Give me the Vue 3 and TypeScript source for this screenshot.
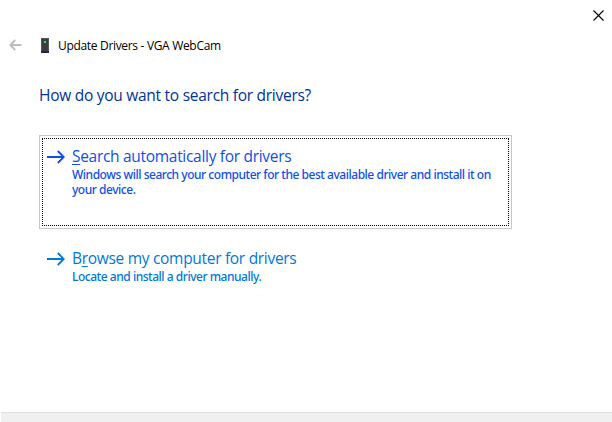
<script setup lang="ts">
interface Choice {
  id: string
  before: string
  key: string
  after: string
  lines: string[]
  focused: boolean
}

const choices: Choice[] = [
  {
    id: 'search',
    before: '',
    key: 'S',
    after: 'earch automatically for drivers',
    lines: ['Windows will search your computer for the best available driver and install it on', 'your device.'],
    focused: true,
  },
  {
    id: 'browse',
    before: 'B',
    key: 'r',
    after: 'owse my computer for drivers',
    lines: ['Locate and install a driver manually.'],
    focused: false,
  },
]
</script>

<template>
  <div class="wizard">
    <div class="caption">
      <button class="close" aria-label="Close">
        <svg width="11" height="11" viewBox="0 0 11 11"><path d="M.5.5l10 10M10.5.5l-10 10" stroke="#000" stroke-width="1.1" fill="none" /></svg>
      </button>
    </div>
    <header class="titlebar">
      <svg class="back" width="13" height="12" viewBox="0 0 13 12"><path d="M12.5 6H1.5M6.2 1L1.3 6l4.9 5" stroke="#bdbdbd" stroke-width="1.8" fill="none" /></svg>
      <svg class="device" width="8" height="15" viewBox="0 0 8 15" shape-rendering="crispEdges">
        <path d="M0 0h8v13H0z" fill="#55565c" />
        <path d="M1 1h6v12H1z" fill="#3c3d42" />
        <path d="M0 13h8v2H0z" fill="#292a35" />
        <path d="M3 3h2v2H3z" fill="#2fef3c" />
      </svg>
      <span class="title">Update Drivers - VGA WebCam</span>
    </header>
    <main class="content">
      <h1 class="heading"><span>How do you want to search for drivers?</span></h1>
      <button v-for="c in choices" :key="c.id" class="choice" :class="[c.id, { focused: c.focused }]">
        <span v-if="c.focused" class="focus"></span>
        <svg class="arrow" width="18" height="14" viewBox="0 0 18 14"><path d="M0 7h16.5M10.8 1l6 6-6 6" stroke="currentColor" stroke-width="1.8" fill="none" /></svg>
        <span class="copy">
          <span class="label"><span>{{ c.before }}<span class="key">{{ c.key }}</span>{{ c.after }}</span></span>
          <span v-for="line in c.lines" :key="line" class="note"><span>{{ line }}</span></span>
        </span>
      </button>
    </main>
    <footer class="footer"></footer>
  </div>
</template>

<style>
body {
  background: #fff;
}
</style>

<style scoped>
.wizard {
  display: flex;
  flex-direction: column;
  width: 612px;
  height: 422px;
  overflow: hidden;
  box-sizing: border-box;
  background: #fff;
  font-family: "Open Sans", "Noto Sans", sans-serif;
}
.caption {
  display: flex;
  justify-content: flex-end;
  height: 30px;
  padding: 10px 8px 0 0;
  box-sizing: border-box;
}
button {
  border: 0;
  padding: 0;
  margin: 0;
  background: none;
  font: inherit;
  text-align: left;
  outline: none;
}
.close {
  display: block;
  width: 11px;
  height: 11px;
}
svg {
  display: block;
  flex: none;
}
.titlebar {
  display: flex;
  align-items: flex-start;
  height: 32px;
  padding-left: 9px;
  box-sizing: border-box;
}
.back {
  margin: 9px 19px 0 0;
}
.device {
  margin: 8px 9px 0 0;
}
.title {
  margin-top: 8px;
  font-size: 12px;
  line-height: 16px;
  letter-spacing: -0.32px;
  color: #000;
  white-space: nowrap;
}
.content {
  display: flex;
  flex-direction: column;
  flex: 1;
  padding: 22px 0 0 39px;
}
.heading {
  margin: 0 0 29px;
  font-size: 15.5px;
  line-height: 22px;
  font-weight: 400;
  letter-spacing: -0.27px;
  color: #003399;
  white-space: nowrap;
}
.choice {
  display: flex;
  position: relative;
  width: 473px;
  height: 94px;
  box-sizing: border-box;
  border: 1px solid transparent;
  padding: 10px 0 0 7px;
  color: #0078d7;
  white-space: nowrap;
}
.choice.focused {
  border-color: #c8c8c8;
  color: #0f4fe6;
}
.choice.browse {
  margin-top: 8px;
}
.focus {
  position: absolute;
  inset: 2px;
  border: 1px dotted #000;
}
.arrow {
  margin: 4px 7px 0 0;
}
.copy {
  display: flex;
  flex-direction: column;
}
.label {
  font-size: 15.5px;
  line-height: 21px;
  letter-spacing: -0.3px;
}
.key {
  text-decoration: underline;
  text-decoration-thickness: 1px;
  text-underline-offset: 2px;
}
.note {
  font-family: "Noto Sans", "Open Sans", sans-serif;
  font-size: 12px;
  line-height: 15px;
  font-weight: 500;
  letter-spacing: -0.47px;
}
.footer {
  flex: none;
  height: 10px;
  margin-left: 1px;
  box-sizing: border-box;
  border-top: 1px solid #dfdfdf;
  background: #f0f0f0;
}
</style>
